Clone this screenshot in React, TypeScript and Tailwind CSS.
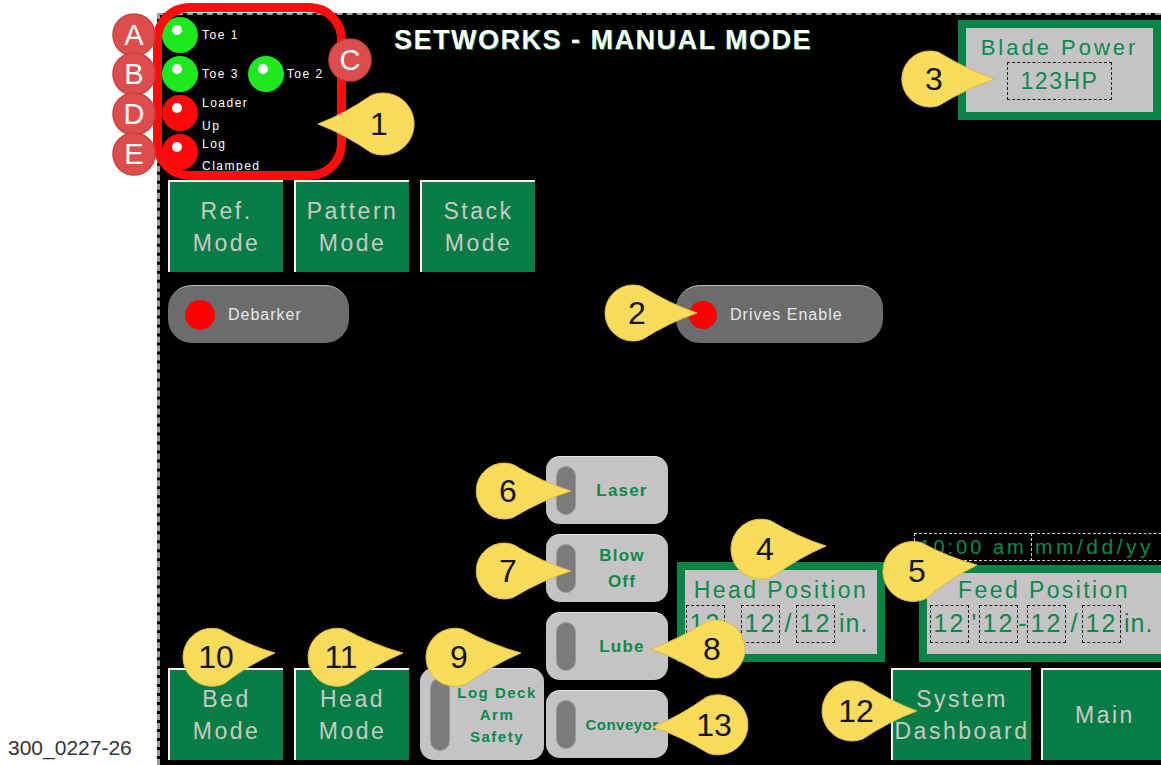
import React from 'react';

const callouts = [
  { n: '1', x: 379, y: 124, tx: 318, ty: 124, r: 31 },
  { n: '2', x: 637, y: 313, tx: 697, ty: 313, r: 28 },
  { n: '3', x: 934, y: 79, tx: 995, ty: 79, r: 28 },
  { n: '4', x: 765, y: 549, tx: 826, ty: 546, r: 30 },
  { n: '5', x: 917, y: 571, tx: 977, ty: 565, r: 30 },
  { n: '6', x: 508, y: 491, tx: 571, ty: 491, r: 28 },
  { n: '7', x: 508, y: 571, tx: 571, ty: 571, r: 28 },
  { n: '8', x: 712, y: 649, tx: 651, ty: 649, r: 29 },
  { n: '9', x: 459, y: 657, tx: 521, ty: 653, r: 29 },
  { n: '10', x: 216, y: 657, tx: 275, ty: 653, r: 29 },
  { n: '11', x: 341, y: 657, tx: 403, ty: 653, r: 29 },
  { n: '12', x: 856, y: 711, tx: 917, ty: 711, r: 30 },
  { n: '13', x: 714, y: 725, tx: 653, ty: 727, r: 30 },
];

const badges = [
  { l: 'A', x: 134, y: 35 },
  { l: 'B', x: 134, y: 74 },
  { l: 'C', x: 350, y: 60 },
  { l: 'D', x: 134, y: 114 },
  { l: 'E', x: 134, y: 154 },
];

const f = (n: number) => n.toFixed(1);

// teardrop: circle round the digit, tail out to the tip
function tearPath(x: number, y: number, tx: number, ty: number, r: number) {
  const vx = tx - x;
  const vy = ty - y;
  const d0 = Math.hypot(vx, vy);
  const ux = vx / d0;
  const uy = vy / d0;
  const cx = x - ux * 4;
  const cy = y - uy * 4;
  const d = Math.hypot(tx - cx, ty - cy);
  const phi = Math.acos(r / d) + 0.12;
  const rot = (a: number) => [ux * Math.cos(a) - uy * Math.sin(a), ux * Math.sin(a) + uy * Math.cos(a)];
  const [ax, ay] = rot(phi);
  const [bx, by] = rot(-phi);
  const p1 = [cx + r * ax, cy + r * ay];
  const p2 = [cx + r * bx, cy + r * by];
  const ctrl = (p: number[]) => {
    const mx = (p[0] + tx) / 2;
    const my = (p[1] + ty) / 2;
    const t = (mx - cx) * ux + (my - cy) * uy;
    const px = cx + ux * t;
    const py = cy + uy * t;
    const l = Math.hypot(px - mx, py - my) || 1;
    return [mx + ((px - mx) / l) * 4, my + ((py - my) / l) * 4];
  };
  const c1 = ctrl(p1);
  const c2 = ctrl(p2);
  return `M ${f(tx)} ${f(ty)} Q ${f(c1[0])} ${f(c1[1])} ${f(p1[0])} ${f(p1[1])} A ${r} ${r} 0 1 1 ${f(p2[0])} ${f(p2[1])} Q ${f(c2[0])} ${f(c2[1])} ${f(tx)} ${f(ty)} Z`;
}

function Annotations() {
  return (
    <svg className="pointer-events-none absolute left-0 top-0" width={1161} height={765} viewBox="0 0 1161 765">
      <rect x={157.5} y={7.5} width={184} height={168} rx={32} fill="none" stroke="#ff0d0d" strokeWidth={9} />
      {badges.map((b) => (
        <g key={b.l}>
          <circle cx={b.x} cy={b.y} r={21} fill="#de4d4d" stroke="#c84444" strokeWidth={1.5} />
          <text x={b.x} y={b.y + 10} textAnchor="middle" fontSize={29} fill="#fff" fontFamily="Liberation Sans, Arial, sans-serif">
            {b.l}
          </text>
        </g>
      ))}
      {callouts.map((c) => (
        <g key={c.n}>
          <path d={tearPath(c.x, c.y, c.tx, c.ty, c.r)} fill="#f9dc5c" stroke="#dcbc44" strokeWidth={1} />
          <text x={c.x} y={c.y + 11} textAnchor="middle" fontSize={32} fill="#151515" fontFamily="Liberation Sans, Arial, sans-serif">
            {c.n}
          </text>
        </g>
      ))}
    </svg>
  );
}

function Lamp({ color }: { color: string }) {
  return (
    <div className={`relative h-[36px] w-[36px] shrink-0 rounded-full ${color}`}>
      <div className="absolute left-[10px] top-[8px] h-[10px] w-[10px] rounded-full bg-white" />
    </div>
  );
}

function ModeButton({ lines, w = 'w-[115px]' }: { lines: string[]; w?: string }) {
  return (
    <div
      className={`flex h-[92px] ${w} shrink-0 flex-col items-center justify-center border-l-2 border-t-2 border-[#f2f2f2] bg-[#087c45] text-[23px] leading-[32px] tracking-[2.5px] text-[#c9c9c9]`}
    >
      {lines.map((l) => (
        <span key={l}>{l}</span>
      ))}
    </div>
  );
}

function Toggle({ lines, h = 'h-[68px]', w = 'w-[122px]', text = 'text-[17px] leading-[26px] tracking-[1.2px]' }: { lines: string[]; h?: string; w?: string; text?: string }) {
  return (
    <div className={`flex ${h} ${w} shrink-0 rounded-[14px] border-t border-[#e6e4e6] bg-[#c6c3c6] py-[9px] pl-[10px]`}>
      <div className="w-[20px] shrink-0 rounded-full border border-[#9a9a9a] bg-[#7b7b7b]" />
      <div className={`flex flex-1 flex-col items-center justify-center whitespace-nowrap font-bold text-[#0b8a49] ${text}`}>
        {lines.map((l) => (
          <span key={l}>{l}</span>
        ))}
      </div>
    </div>
  );
}

function Val({ v }: { v: string }) {
  return (
    <div className="flex h-[38px] w-[39px] shrink-0 items-center justify-center border border-dashed border-[#1a1a1a] text-[25px] tracking-[2px] text-[#0b8a49]">
      {v}
    </div>
  );
}

export default function App() {
  return (
    <div className="relative h-[765px] w-[1161px] overflow-hidden bg-white font-['Liberation_Sans',Arial,sans-serif]">
      <div className="flex h-full">
        {/* caption in the margin */}
        <div className="flex w-[157px] shrink-0 flex-col justify-end pb-[5px] pl-[8px] text-[21px] leading-[24px] text-[#333]">
          300_0227-26
        </div>

        {/* HMI screen */}
        <div className="mt-[13px] min-w-0 flex-1 overflow-hidden border-l-[3px] border-t-2 border-dashed border-[#9c9c9c] bg-black">
          <div className="flex h-[165px] shrink-0">
            <div className="w-[234px] shrink-0 pl-[2px] text-[12px] tracking-[1.5px] text-white">
              <div className="flex h-[39px] items-center">
                <Lamp color="bg-[#1ee81e]" />
                <span className="ml-[4px]">Toe 1</span>
              </div>
              <div className="flex h-[39px] items-center">
                <Lamp color="bg-[#1ee81e]" />
                <span className="ml-[4px]">Toe 3</span>
                <div className="ml-[9px]">
                  <Lamp color="bg-[#1ee81e]" />
                </div>
                <span className="ml-[3px]">Toe 2</span>
              </div>
              <div className="flex h-[39px] items-center">
                <Lamp color="bg-[#ff0a0a]" />
                <span className="ml-[4px] mt-[4px] flex flex-col leading-[23px]">
                  <span>Loader</span>
                  <span>Up</span>
                </span>
              </div>
              <div className="flex h-[39px] items-center">
                <Lamp color="bg-[#ff0a0a]" />
                <span className="ml-[4px] mt-[7px] flex flex-col leading-[22px]">
                  <span>Log</span>
                  <span>Clamped</span>
                </span>
              </div>
            </div>

            <div className="mt-[11px] whitespace-nowrap text-[27px] font-bold leading-[28px] tracking-[1.5px] text-white [text-shadow:1px_1px_0_#0b8a49]">
              SETWORKS - MANUAL MODE
            </div>

            <div className="ml-auto mt-[5px] h-[100px] w-[203px] shrink-0 border-[8px] border-[#0a8446] bg-[#c6c3c6]">
              <div className="flex flex-col items-center pt-[7px]">
                <span className="text-[22px] leading-[26px] tracking-[3px] text-[#0b8a49]">Blade Power</span>
                <div className="mt-[1px] flex h-[38px] w-[105px] items-center justify-center border border-dashed border-[#1a1a1a] text-[23px] tracking-[1.5px] text-[#0b8a49]">
                  123HP
                </div>
              </div>
            </div>
          </div>

          {/* mode buttons */}
          <div className="flex gap-[11px] pl-[8px]">
            <ModeButton lines={['Ref.', 'Mode']} />
            <ModeButton lines={['Pattern', 'Mode']} />
            <ModeButton lines={['Stack', 'Mode']} />
          </div>

          {/* pills */}
          <div className="mt-[13px] flex pl-[8px] text-[16px] tracking-[1px] text-[#e8e8e8]">
            <div className="flex h-[58px] w-[181px] shrink-0 items-center rounded-[24px] border-t border-[#b8b8b8] bg-[#6c6c6c] pl-[17px]">
              <div className="h-[30px] w-[30px] rounded-full bg-[#ff0000]" />
              <span className="ml-[13px]">Debarker</span>
            </div>
            <div className="ml-[327px] flex h-[58px] w-[207px] shrink-0 items-center rounded-[24px] border-t border-[#b8b8b8] bg-[#6c6c6c] pl-[13px]">
              <div className="h-[28px] w-[28px] rounded-full bg-[#ff0000]" />
              <span className="ml-[13px]">Drives Enable</span>
            </div>
          </div>

          {/* lower area */}
          <div className="mt-[113px] flex items-start pl-[8px]">
            <div className="mt-[212px] flex shrink-0 gap-[11px]">
              <ModeButton lines={['Bed', 'Mode']} />
              <ModeButton lines={['Head', 'Mode']} />
            </div>
            <div className="ml-[11px] mt-[212px]">
              <Toggle lines={['Log Deck', 'Arm', 'Safety']} h="h-[92px]" w="w-[124px]" text="text-[15px] leading-[22px] tracking-[1.5px]" />
            </div>
            <div className="ml-[2px] flex shrink-0 flex-col gap-[10px]">
              <Toggle lines={['Laser']} />
              <Toggle lines={['Blow', 'Off']} />
              <Toggle lines={['Lube']} />
              <Toggle lines={['Conveyor']} text="text-[15px] leading-[26px] tracking-[0.5px]" />
            </div>

            <div className="flex shrink-0 flex-col">
              <div className="ml-[246px] mt-[77px] flex h-[28px] shrink-0 text-[#0b8a49]">
                <div className="flex w-[118px] items-center justify-center border border-dashed border-[#d0d0d0] text-[20px] tracking-[3px]">
                  10:00 am
                </div>
                <div className="flex w-[150px] items-center border border-l-0 border-dashed border-[#d0d0d0] pl-[3px] text-[21px] tracking-[3.5px]">
                  mm/dd/yy
                </div>
              </div>

              <div className="mt-[1px] flex items-start">
                <div className="ml-[9px] h-[100px] w-[208px] shrink-0 border-[8px] border-[#0a8446] bg-[#c6c3c6]">
                  <div className="pt-[6px] text-center text-[23px] leading-[28px] tracking-[2.4px] text-[#0b8a49]">Head Position</div>
                  <div className="mt-[1px] flex items-center pl-[1px] text-[25px] text-[#0b8a49]">
                    <Val v="12" />
                    <div className="w-[16px]" />
                    <Val v="12" />
                    <span className="w-[16px] text-center">/</span>
                    <Val v="12" />
                    <span className="ml-[4px] tracking-[1px]">in.</span>
                  </div>
                </div>
                <div className="ml-[34px] mt-[3px] h-[97px] w-[262px] shrink-0 border-[8px] border-r-0 border-[#0a8446] bg-[#c6c3c6]">
                  <div className="w-[234px] pt-[3px] text-center text-[23px] leading-[28px] tracking-[2.4px] text-[#0b8a49]">Feed Position</div>
                  <div className="mt-[1px] flex items-center pl-[3px] text-[25px] text-[#0b8a49]">
                    <Val v="12" />
                    <span className="w-[10px] text-center">'</span>
                    <Val v="12" />
                    <span className="w-[9px] text-center">-</span>
                    <Val v="12" />
                    <span className="w-[16px] text-center">/</span>
                    <Val v="12" />
                    <span className="ml-[3px] tracking-[1px]">in.</span>
                  </div>
                </div>
              </div>

              <div className="ml-[223px] mt-[6px] flex gap-[10px]">
                <ModeButton lines={['System', 'Dashboard']} w="w-[140px]" />
                <div className="flex h-[92px] w-[130px] shrink-0 items-center border-l-2 border-t-2 border-[#f2f2f2] bg-[#087c45] pl-[32px] text-[23px] tracking-[2.5px] text-[#c9c9c9]">
                  Main
                </div>
              </div>
            </div>
          </div>
        </div>
      </div>

      <Annotations />
    </div>
  );
}
